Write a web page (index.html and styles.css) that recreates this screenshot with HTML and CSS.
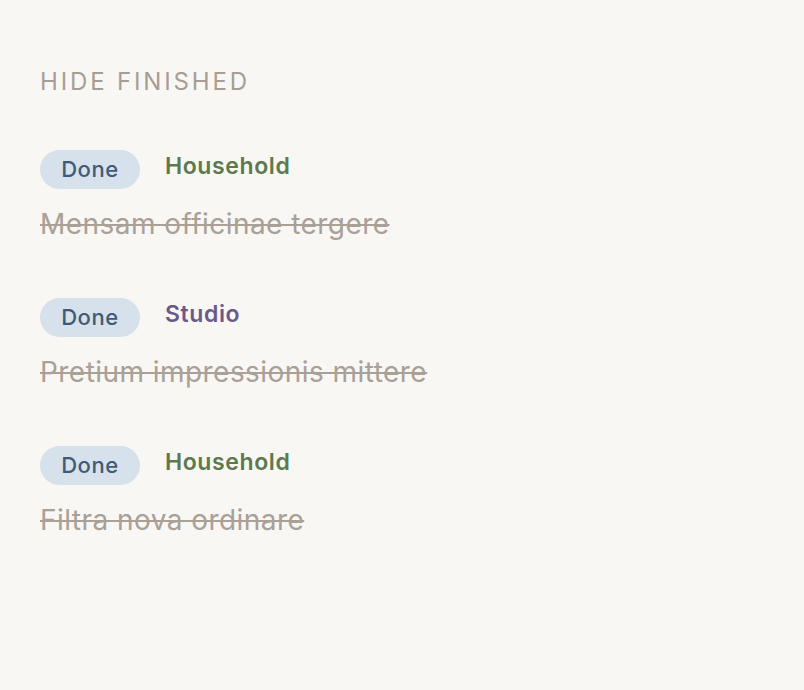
FILE: index.html
```html
<!DOCTYPE html>
<html lang="en">
<head>
  <meta charset="UTF-8" />
  <title>Finished tasks</title>
  <link rel="stylesheet" href="styles.css">
</head>
<body>

<div class="list">
  <h2 class="heading">Hide finished</h2>

  <div class="task">
    <div class="task-top">
      <span class="status">Done</span>
      <span class="tag household">Household</span>
    </div>
    <div class="title">Mensam officinae tergere</div>
  </div>

  <div class="task">
    <div class="task-top">
      <span class="status">Done</span>
      <span class="tag studio">Studio</span>
    </div>
    <div class="title">Pretium impressionis mittere</div>
  </div>

  <div class="task">
    <div class="task-top">
      <span class="status">Done</span>
      <span class="tag household">Household</span>
    </div>
    <div class="title">Filtra nova ordinare</div>
  </div>
</div>

</body>
</html>
```

FILE: styles.css
```css
* {
  box-sizing: border-box;
}
body {
  margin: 0;
  background-color: #f9f7f4;
  font-family: Inter, "Noto Sans", sans-serif;
}
.list {
  padding: 66px 40px 40px;
}
.heading {
  margin: 0 0 52px;
  font-size: 24px;
  font-weight: 400;
  letter-spacing: 2.85px;
  text-transform: uppercase;
  color: #a69e95;
  line-height: 32px;
}
.task {
  margin-bottom: 56px;
}
.task-top {
  display: flex;
  align-items: flex-start;
  gap: 25px;
}
.status {
  display: inline-block;
  width: 100px;
  height: 39px;
  line-height: 39px;
  text-align: center;
  border-radius: 20px;
  background-color: #d6e1ec;
  color: #3e5b78;
  font-size: 22px;
  font-weight: 500;
  letter-spacing: 0.6px;
}
.tag {
  font-size: 23px;
  font-weight: 600;
  letter-spacing: 0.6px;
  line-height: 32px;
}
.household {
  color: #5c7a4e;
}
.studio {
  color: #6a5a8a;
}
.title {
  margin-top: 17px;
  font-size: 28px;
  letter-spacing: 0.45px;
  line-height: 36px;
  color: #a9a097;
  text-decoration: line-through;
  text-decoration-thickness: 2px;
}
```
